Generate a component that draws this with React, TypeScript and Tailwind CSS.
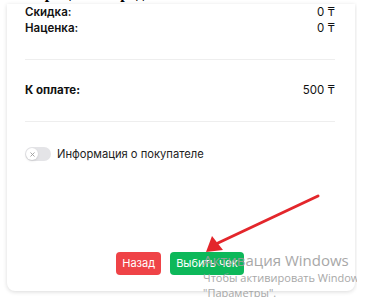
import { X } from "lucide-react";

const font = { fontFamily: "Inter, 'Noto Sans', sans-serif" };

function Row({ label, value, bold }: { label: string; value: string; bold?: boolean }) {
  return (
    <div className="flex items-center justify-between h-4 text-[11.5px] leading-4 text-[#111]">
      <span className={bold ? "font-bold" : "font-semibold"}>{label}</span>
      <span>{value}</span>
    </div>
  );
}

export default function App() {
  return (
    <div className="relative w-[365px] h-[306px] bg-white overflow-hidden" style={font}>
      <div className="relative w-[357px] h-[297px] overflow-hidden">
        <div className="-mt-[17px] pl-[16px] h-[21px] text-[16px] leading-5 font-bold text-black font-['Liberation_Serif',serif]">
          Операция «Передана»?
        </div>

        <div className="ml-[7px] w-[348px] bg-white rounded-b-lg shadow-[0_1px_4px_rgba(0,0,0,0.15)] pl-[18px] pr-[20px] pb-4">
          <Row label="Скидка:" value="0 ₸" />
          <Row label="Наценка:" value="0 ₸" />
          <div className="mt-[23px] h-px bg-[#eeeeee]" />
          <div className="mt-[22px]">
            <Row label="К оплате:" value="500 ₸" bold />
          </div>
          <div className="mt-[23px] h-px bg-[#eeeeee]" />

          <div className="mt-[24px] flex items-center gap-[6px] h-4">
            <div className="w-[26px] h-[14px] rounded-full bg-[#e4e4e7] flex items-center px-px">
              <div className="w-3 h-3 rounded-full bg-white flex items-center justify-center shadow-sm">
                <X className="w-[7px] h-[7px] text-[#999]" strokeWidth={3} />
              </div>
            </div>
            <span className="text-[11.2px] text-[#222]">Информация о покупателе</span>
          </div>

          <div className="mt-[90px] flex justify-center gap-[9px]">
            <button className="h-[23px] px-[6px] rounded bg-[#ef4347] text-white text-[11px]">Назад</button>
            <button className="h-[23px] px-[6px] rounded bg-[#0db85a] text-white text-[11px]">Выбить чек</button>
          </div>
        </div>

        <div className="absolute left-[203px] top-[250px] text-[#9e9e9e] whitespace-nowrap font-['Open_Sans',sans-serif]">
          <div className="text-[15px] leading-[20px] opacity-90">Активация Windows</div>
          <div className="text-[11px] leading-[15px] opacity-90">Чтобы активировать Windows, перейдите</div>
          <div className="text-[11px] leading-[15px] opacity-90">"Параметры".</div>
        </div>

        <svg className="absolute left-0 top-0" width="357" height="297" viewBox="0 0 357 297">
          <line x1="318" y1="196" x2="218" y2="243" stroke="#e3262b" strokeWidth="3" strokeLinecap="round" />
          <polygon points="206,252 212,236 223,250" fill="#e3262b" />
        </svg>
      </div>
    </div>
  );
}
